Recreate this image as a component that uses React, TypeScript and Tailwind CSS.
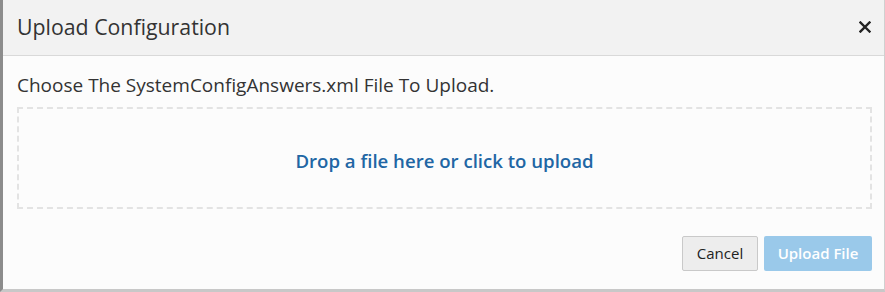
import React from 'react';

export default function App() {
  return (
    <div className="w-[885px] h-[292px] bg-[#fcfcfc] font-['Open_Sans',sans-serif] text-[#333] flex flex-col border-l-[3px] border-l-[#8c8c8c] border-b-[3px] border-b-[#c8c8c8] border-r border-r-[#d0d0d0]">
      {/* Header */}
      <div className="h-[56px] shrink-0 bg-[#f2f2f2] border-b border-[#d9d9d9] flex items-center justify-between pl-[14px] pr-[12px]">
        <h3 className="text-[21.3px] leading-none text-[#333] -mt-[1px]">Upload Configuration</h3>
        <button className="w-[12px] h-[12px] text-[#222] mr-[1px] -mt-[1px]" aria-label="Close">
          <svg viewBox="0 0 12 12" width="12" height="12">
            <path d="M1.5 1.5 L10.5 10.5 M10.5 1.5 L1.5 10.5" stroke="currentColor" strokeWidth="2.4" strokeLinecap="square" />
          </svg>
        </button>
      </div>

      {/* Body */}
      <div className="flex-1 flex flex-col pl-[14px] pr-[12px] pt-[17px]">
        <p className="text-[19px] leading-[24px]">Choose The SystemConfigAnswers.xml File To Upload.</p>
        <div className="mt-[10px] h-[102px] border-2 border-dashed border-[#e3e3e3] flex items-center justify-center">
          <span className="text-[18.6px] font-semibold text-[#2166a4] mt-[6px]">Drop a file here or click to upload</span>
        </div>
        <div className="mt-[27px] flex justify-end gap-[6px]">
          <button className="w-[76px] h-[35px] bg-[#ededed] border border-[#c9c9c9] rounded-[2px] text-[15px] text-[#222]">
            Cancel
          </button>
          <button className="w-[108px] h-[35px] bg-[#9ac9ea] rounded-[2px] text-[15px] font-semibold text-white">
            Upload File
          </button>
        </div>
      </div>
    </div>
  );
}
